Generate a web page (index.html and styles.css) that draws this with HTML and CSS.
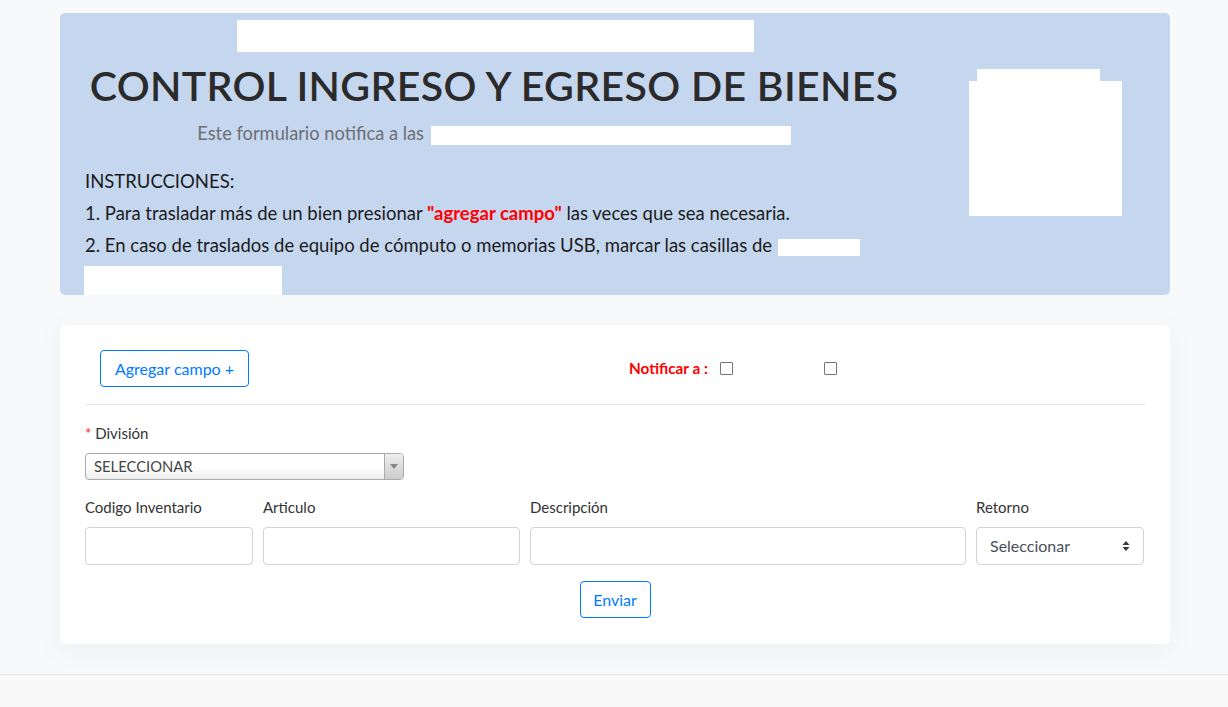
FILE: index.html
```html
<!DOCTYPE html>
<html lang="es">
<head>
<meta charset="utf-8">
<title>Control ingreso y egreso de bienes</title>
<link rel="stylesheet" href="styles.css">
</head>
<body>
<main class="container">
  <section class="banner">
    <div class="banner-main">
      <div class="redact redact-top"></div>
      <h1 class="title">CONTROL INGRESO Y EGRESO DE BIENES</h1>
      <p class="subtitle">Este formulario notifica a las <span class="redact redact-inline redact-sub"></span></p>
      <div class="instructions">
        <p>INSTRUCCIONES:</p>
        <p>1. Para trasladar más de un bien presionar <strong class="hl">"agregar campo"</strong> las veces que sea necesaria.</p>
        <p>2. En caso de traslados de equipo de cómputo o memorias USB, marcar las casillas de <span class="redact redact-inline redact-cas"></span></p>
      </div>
      <div class="redact redact-bottom"></div>
    </div>
    <div class="banner-logo">
      <div class="logo">
        <div class="redact logo-top"></div>
        <div class="redact logo-body"></div>
      </div>
    </div>
  </section>

  <section class="card">
    <div class="toolbar">
      <button class="btn btn-add" type="button">Agregar campo +</button>
      <div class="notify">
        <span class="notify-label">Notificar a :</span>
        <label class="check"><span class="box"></span><span class="check-text"></span></label>
        <label class="check"><span class="box"></span><span class="check-text"></span></label>
      </div>
    </div>
    <hr class="divider">
    <div class="field-division">
      <label class="lbl"><span class="req">*</span> División</label>
      <div class="select2">
        <span class="select2-text">SELECCIONAR</span>
        <span class="select2-arrow"><span class="tri"></span></span>
      </div>
    </div>
    <div class="grid">
      <div class="col">
        <label class="lbl">Codigo Inventario</label>
        <div class="input"></div>
      </div>
      <div class="col">
        <label class="lbl">Articulo</label>
        <div class="input"></div>
      </div>
      <div class="col">
        <label class="lbl">Descripción</label>
        <div class="input"></div>
      </div>
      <div class="col">
        <label class="lbl">Retorno</label>
        <div class="input select">
          <span>Seleccionar</span>
          <svg class="updown" width="8" height="12" viewBox="0 0 8 12"><path d="M4 1 L7.5 5 H0.5 Z M4 11 L7.5 7 H0.5 Z" fill="#343a40"/></svg>
        </div>
      </div>
    </div>
    <div class="actions">
      <button class="btn btn-send" type="button">Enviar</button>
    </div>
  </section>
</main>
<footer class="footer"></footer>
</body>
</html>
```
FILE: styles.css
```css
* { box-sizing: border-box; }
html, body { margin: 0; padding: 0; }
body {
  background: #f8f9fa;
  font-family: "Lato", "Open Sans", sans-serif;
  color: #212529;
  font-size: 16px;
  line-height: 1.5;
  height: 707px;
  overflow: hidden;
}
p { margin: 0; }

.container {
  width: 1110px;
  margin: 0 auto 0 60px;
  padding-top: 13px;
}

.banner {
  display: flex;
  background: #c5d7ef;
  border-radius: 5px;
  height: 282px;
  overflow: hidden;
}
.banner-main {
  width: 868px;
  display: flex;
  flex-direction: column;
  align-items: center;
  padding-top: 7px;
}
.redact { background: #fff; }
.redact-top { width: 517px; height: 33px; margin-left: 3px; }
.title {
  margin: 10px 0 0;
  font-size: 41px;
  font-weight: 600;
  line-height: 48px;
  color: #2b2b2b;
  letter-spacing: 0.3px;
}
.subtitle {
  margin-top: 11px;
  font-size: 18.3px;
  color: #6c6f74;
  line-height: 24px;
}
.redact-inline { display: inline-block; vertical-align: middle; }
.redact-sub { width: 360px; height: 19px; margin-left: 2px; }
.instructions {
  align-self: stretch;
  padding-left: 25px;
  margin-top: 20px;
  font-size: 18.5px;
  color: #1c1c1c;
}
.instructions p { line-height: 32px; }
.hl { color: #ff0000; font-weight: 700; }
.redact-cas { width: 82px; height: 17px; margin-left: 1px; }
.redact-bottom { align-self: flex-start; margin-left: 24px; margin-top: 5px; width: 198px; height: 30px; }

.banner-logo {
  flex: 1;
  padding-top: 56px;
  padding-left: 41px;
}
.logo { width: 153px; }
.logo-top { width: 123px; height: 12px; margin-left: 8px; }
.logo-body { width: 153px; height: 135px; }

.card {
  margin-top: 30px;
  background: #fff;
  border-radius: 5px;
  padding: 25px 25px 26px;
  box-shadow: 0 6px 24px rgba(120, 130, 170, 0.08);
}
.toolbar { display: flex; align-items: center; }
.btn {
  font-family: inherit;
  font-size: 16px;
  background: #fff;
  color: #007bff;
  border: 1px solid #007bff;
  border-radius: 4px;
  height: 37px;
  line-height: 1;
  padding: 0;
  white-space: nowrap;
}
.btn-add { margin-left: 15px; width: 149px; }
.notify { display: flex; align-items: center; margin-left: 380px; }
.notify-label { color: #ff0000; font-weight: 700; font-size: 15.3px; margin-right: 12px; }
.check { display: flex; align-items: center; }
.box { width: 13px; height: 13px; border: 1px solid #767676; border-radius: 1px; background: #fff; }
.check-text { width: 91px; }

.divider { border: 0; border-top: 1px solid #e3e3e3; margin: 17px 0 17px; }

.lbl { display: block; font-size: 15px; color: #333; line-height: 22px; }
.req { color: #ff2020; }
.select2 {
  margin-top: 9px;
  width: 319px;
  height: 27px;
  border: 1px solid #aaa;
  border-radius: 4px;
  background: linear-gradient(#fff 50%, #eee);
  display: flex;
  align-items: center;
}
.select2-text { flex: 1; padding-left: 8px; font-size: 14.8px; color: #444; }
.select2-arrow {
  width: 19px; height: 100%;
  border-left: 1px solid #aaa;
  display: flex; align-items: center; justify-content: center;
  background: linear-gradient(#eee, #ccc);
  border-radius: 0 4px 4px 0;
}
.tri { width: 0; height: 0; border-left: 4px solid transparent; border-right: 4px solid transparent; border-top: 5px solid #888; }

.grid {
  margin-top: 16px;
  display: grid;
  grid-template-columns: 168px 257px 436px 168px;
  column-gap: 10px;
}
.col .lbl { margin-bottom: 9px; }
.input {
  height: 38px;
  border: 1px solid #ced4da;
  border-radius: 4px;
  background: #fff;
}
.select { display: flex; align-items: center; justify-content: space-between; padding: 0 13px 0 13px; color: #495057; font-size: 16px; }

.actions { display: flex; justify-content: center; margin-top: 16px; }
.btn-send { width: 71px; }

.footer {
  margin-top: 30px;
  border-top: 1px solid #e6e6e6;
  background: #f9f9f9;
  height: 40px;
}
```
